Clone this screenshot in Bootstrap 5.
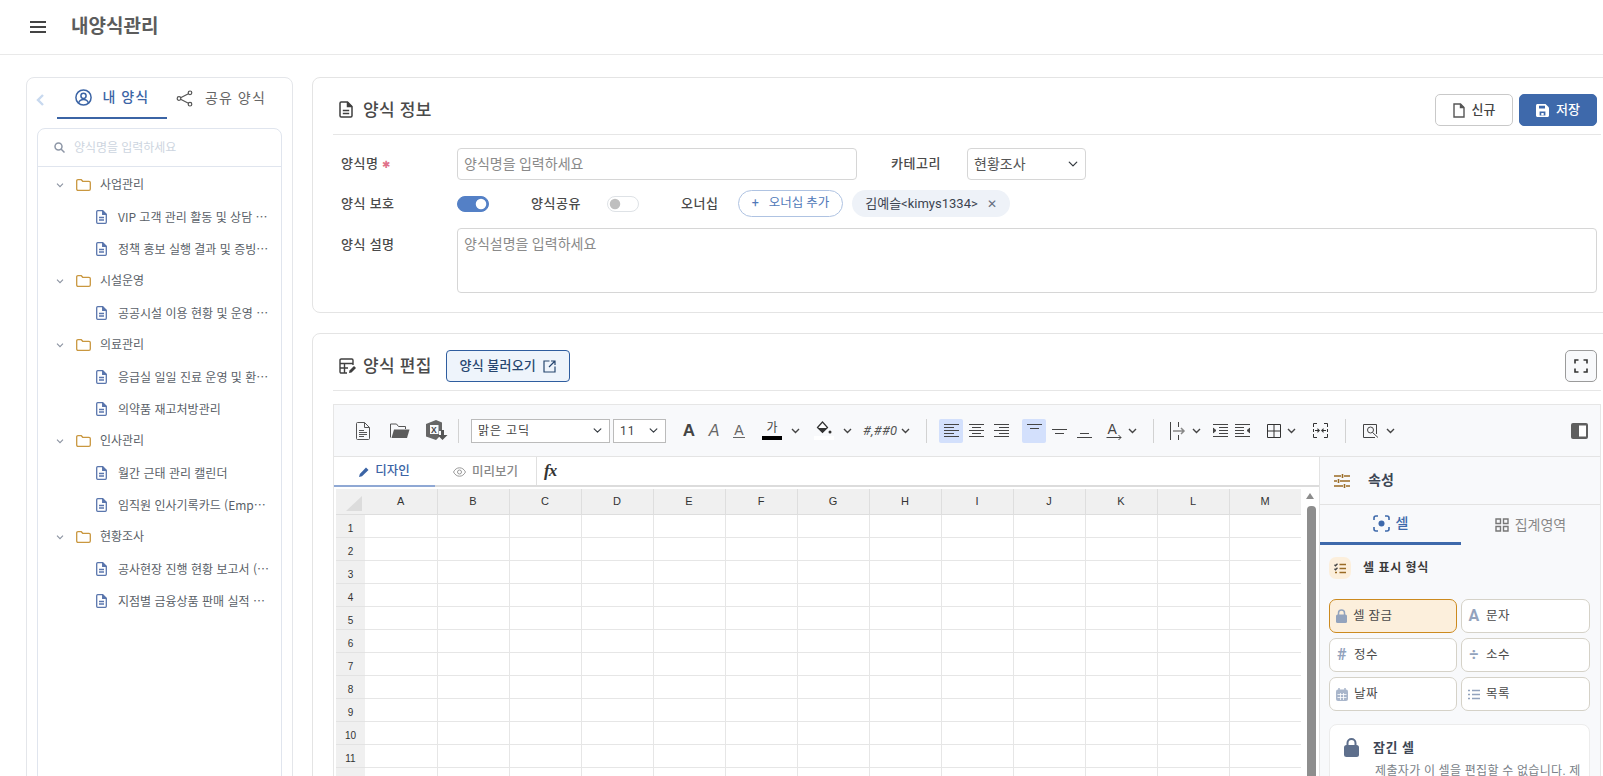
<!DOCTYPE html>
<html lang="ko">
<head>
    <meta charset="UTF-8">
    <meta name="viewport" content="width=device-width, initial-scale=1.0">
    <title>내양식관리</title>
    <link rel="stylesheet" href="https://cdn.jsdelivr.net/npm/bootstrap@5.3.0/dist/css/bootstrap.min.css">
    <style>
        html, body { height: 776px; overflow: hidden; }
        body {
            font-family: Roboto, "Noto Sans CJK KR", sans-serif;
            font-size: 13px;
            color: #444;
            background: #fff;
        }
        svg { display: block; flex: none; }

        .top-bar { height: 55px; border-bottom: 1px solid #e9e9e9; padding-left: 30px; }
        .top-title { font-size: 19px; font-weight: 700; color: #5c5c5c; margin: 0 0 0 25px; }
        .burger { width: 16px; height: 12px; border-top: 2px solid #444; border-bottom: 2px solid #444; position: relative; }
        .burger::after { content: ""; display: block; height: 2px; background: #444; margin-top: 3px; }

        .page-body { padding: 22px 0 0 26px; width: 1640px; }

        .side-box { width: 267px; height: 800px; flex: none; border: 1px solid #e4e6ea; border-radius: 8px; padding: 0 10px; margin-right: 19px; }
        .side-tabs { height: 50px; }
        .side-back { width: 20px; margin-left: -1px; margin-right: 1px; color: #c8d9ef; }
        .side-tab { width: 110px; height: 41px; gap: 11px; font-size: 14px; color: #666; letter-spacing: 1.200px; }
        .side-tab.on { color: #3b64a5; font-weight: 500; border-bottom: 2px solid #3b64a5; }
        .side-tab.other { width: 100px; padding-left: 9px; gap: 12px; white-space: nowrap; letter-spacing: 1.200px; }
        .tree-box { border: 1px solid #e0e5ee; border-radius: 8px 8px 0 0; height: 760px; }
        .tree-search { height: 38px; border-bottom: 1px solid #e0e5ee; padding-left: 16px; gap: 9px; font-size: 12px; color: #cdd5e0; }
        .tree-list { padding-top: 2px; }
        .tree-row { height: 32px; font-size: 12px; color: #5a5f68; }
        .tree-row.folder { padding-left: 18px; }
        .tree-row.folder svg:first-child { margin-right: 12px; }
        .tree-row.folder svg + svg { margin-right: 9px; }
        .tree-row.doc { padding-left: 58px; padding-right: 12px; gap: 11px; }
        .tree-name { font-family: "Noto Sans CJK KR", sans-serif; white-space: nowrap; }

        .main-col { width: 1310px; flex: none; }
        .form-card { border: 1px solid #e4e4e4; border-radius: 8px; padding: 0 0 0 20px; width: 1310px; --bs-card-border-color: #e4e4e4; margin-bottom: 20px; }
        .form-card .card-top { padding: 16px 0 8px 6px; margin-right: 20px; border-bottom: 1px solid #e6e6e6; height: 57px; }
        .card-title-txt { font-size: 17px; font-weight: 500; color: #4a4a4a; letter-spacing: .4px; margin: 0 0 0 10px; }
        .card-title-txt.tight { margin-left: 7px; }
        .top-gap { gap: 6px; }
        .top-btn { width: 78px; height: 32px; font-size: 13px; font-weight: 500; padding: 0; gap: 7px; border-radius: 5px; }
        .top-btn.plain { border: 1px solid #c9c9c9; background: #fff; color: #444; }
        .top-btn.solid { background: #3e69ab; border: 1px solid #3e69ab; color: #fff; }
        .load-btn { width: 124px; height: 32px; padding: 0; margin-left: 14px; font-size: 13px; font-weight: 500; color: #26466f; background: #eef4fb; border: 1px solid #2f5d9f; border-radius: 4px; gap: 7px; letter-spacing: .2px; white-space: nowrap; }
        .full-btn { width: 32px; height: 32px; padding: 0; margin-right: 4px; border: 1px solid #9b9b9b; border-radius: 5px; background: #f8f9fb; }

        .form-body { padding: 13px 24px 19px 8px; }
        .f-row { margin-bottom: 10px; }
        .f-label { font-size: 13px; font-weight: 500; color: #4a4a4a; flex: none; letter-spacing: .5px; }
        .w116 { width: 116px; }
        .req { color: #e0718a; font-size: 10px; margin-left: 4px; }
        .f-input { width: 400px; height: 32px; font-size: 14px; padding: 0 6px; border-color: #d6d6d6; border-radius: 4px; color: #555; }
        .f-input::placeholder, .f-area::placeholder { color: #8a8a8a; }
        .f-select { width: 119px; height: 32px; font-size: 14px; padding: 0 24px 0 6px; border-color: #d6d6d6; border-radius: 4px; color: #555; background-position: right 6px center; background-size: 12px 10px; }
        .f-area { height: 65px; margin-top: 1px; font-size: 14px; padding: 5px 6px; border-color: #d6d6d6; border-radius: 4px; resize: none; }
        .area-label { padding-top: 8px; }
        .sw { width: 32px !important; height: 16px; margin: 0 !important; float: none; }
        .form-check-input.sw:checked { background-color: #5480c6; border-color: #5480c6; }
        .f-switch { padding: 0; min-height: 0; margin: 0; }
        .cat-label { margin-left: 34px; width: 76px; }
        .share-label { margin-left: 42px; width: 50px; }
        .share-sw { margin-left: 26px; }
        .own-label { margin-left: 42px; width: 38px; }
        .owner-add { width: 105px; height: 27px; padding: 0; margin-left: 19px; font-size: 12.500px; color: #5078b8; background: #fff; border: 1px solid #afc3e2; border-radius: 14px; gap: 10px; }
        .owner-chip { width: 158px; height: 27px; margin-left: 9px; font-size: 13px; color: #3c4450; background: #eef2f8; border-radius: 14px; gap: 9px; }
        .chip-x { color: #66707f; font-size: 12px; }

        .editor-box { height: 500px; border: 1px solid #e6e6e6; margin: 13px 20px 0 0; background: #fff; width: 1268px; }
        .tool-bar { height: 52px; background: #f8f9fb; border-bottom: 1px solid #e4e4e4; }
        .t-slot { width: 24px; height: 24px; flex: none; border-radius: 2px; }
        .t-slot.on { background: #d3e0fc; }
        .t-slot.w22 { width: 22px; }
        .t-caret { width: 10px; flex: none; }
        .t-sep { width: 1px; height: 24px; background: #d2d2d2; flex: none; }
        .t-font { width: 139px; height: 24px; font-size: 12px; padding: 0 20px 0 6px; border: 1px solid #bbb; border-radius: 0; color: #444; background-position: right 6px center; background-size: 11px 9px; letter-spacing: 1px; }
        .t-size { width: 53px; margin-left: 3px; }
        .t-fmt { width: 36px; font-size: 13px; font-style: italic; color: #555; letter-spacing: .3px; white-space: nowrap; }
        .a-glyph { font-family: "Liberation Sans", sans-serif; font-size: 16px; line-height: 1; color: #444; }
        .a-bold { font-weight: 700; font-size: 17px; }
        .a-ital { font-style: italic; color: #666; }
        .a-under { color: #666; border-bottom: 1px solid #666; padding: 0 1px; font-size: 14px; }
        .ga-col { width: 20px; flex: none; font-size: 12px; line-height: 1; color: #444; text-align: center; }
        .ga-bar { height: 4px; background: #000; margin-top: 2px; }
        .fill-bar { height: 4px; background: #fff; margin-top: 1px; }
        .fill-col { width: 20px; flex: none; }
        .ml1 { margin-left: 1px; } .ml2 { margin-left: 2px; } .ml3 { margin-left: 3px; }
        .ml5 { margin-left: 5px; } .ml6 { margin-left: 6px; } .ml7 { margin-left: 7px; }
        .ml9 { margin-left: 9px; } .ml10 { margin-left: 10px; } .ml11 { margin-left: 11px; }
        .ml12 { margin-left: 12px; } .ml13 { margin-left: 13px; } .ml14 { margin-left: 14px; } .ml15 { margin-left: 15px; }
        .ml17 { margin-left: 17px; }

        .sheet-side { width: 985px; flex: none; }
        .sheet-tabs { height: 30px; border-bottom: 2px solid #dcdcdc; }
        .s-tab { width: 101px; height: 30px; margin-bottom: -2px; font-size: 12.5px; gap: 6px; color: #888; font-weight: 500; }
        .s-tab.on { color: #3b64a5; border-bottom: 2px solid #8fa8d4; }
        .s-fx { border-left: 1px solid #e0e0e0; width: 400px; padding-left: 7px; height: 28px; font-family: "Liberation Serif", serif; font-style: italic; font-weight: 700; font-size: 17px; color: #333; letter-spacing: -1px; }
        .sheet-wrap { padding: 2px 0 0 2px; height: 460px; overflow: hidden; }
        .sheet-tbl { table-layout: fixed; width: 965px; border-collapse: collapse; font-family: "Liberation Sans", sans-serif; font-size: 11px; color: #333; }
        .sheet-tbl th { background: #f0f0f0; font-weight: 400; text-align: center; border-right: 1px solid #dedede; border-bottom: 1px solid #dedede; padding: 0; }
        .sheet-tbl thead th { height: 25px; padding-top: 0; }
        .sheet-tbl tbody th { height: 23px; padding-top: 7px; font-size: 10px; line-height: 1; border-right: 0; border-bottom-color: #e3e3e3; }
        .sheet-tbl td { border-right: 1px solid #e6e6e6; border-bottom: 1px solid #e6e6e6; padding: 0; }
        .sheet-tbl .corner { position: relative; border-right: 0; }
        .corner-tri { position: absolute; right: 3px; bottom: 3px; width: 0; height: 0; border-left: 16px solid transparent; border-bottom: 15px solid #dcdcdc; }
        .sheet-scroll { width: 18px; flex: none; padding-top: 6px; }
        .scroll-up { width: 0; height: 0; margin: 0 auto; border-left: 4px solid transparent; border-right: 4px solid transparent; border-bottom: 6px solid #8c8c8c; }
        .scroll-thumb { width: 9px; height: 400px; margin: 7px 0 0 6px; background: #8e8e8e; border-radius: 4px 4px 0 0; }

        .prop-side { flex: 1; min-width: 0; background: #f8f9fb; border-left: 1px solid #e3e3e3; padding: 0; }
        .prop-head { height: 48px; border-bottom: 1px solid #e3e3e3; padding-left: 14px; gap: 18px; font-size: 14px; font-weight: 700; color: #3d4654; }
        .prop-tabs { height: 40px; }
        .prop-tab { width: 141px; height: 40px; gap: 6px; font-size: 14px; color: #888; }
        .prop-tab.on { color: #3e69ab; font-weight: 500; border-bottom: 3px solid #3e69ab; }
        .prop-tab.wide { width: 139px; }
        .prop-body { padding: 12px 9px 0; }
        .sec-badge { width: 22px; height: 22px; background: #fcefdc; border-radius: 7px; }
        .sec-title { font-size: 12px; font-weight: 700; color: #3b3b3b; margin-left: 12px; letter-spacing: .7px; }
        .fmt-grid { display: grid; grid-template-columns: 128px 129px; gap: 5px 4px; margin-top: 20px; }
        .fmt-btn { height: 34px; padding: 0 0 0 6px; gap: 6px; font-size: 12.5px; color: #4a4a4a; background: #fff; border: 1px solid #d5d2c8; border-radius: 7px; letter-spacing: .5px; }
        .fmt-btn.on { background: #fcefdc; border-color: #cc8a1e; }
        .fmt-ico { width: 12px; flex: none; font-size: 16px; line-height: 1; color: #93a3bd; text-align: center; font-weight: 700; }
        .info-box { margin-top: 13px; width: 261px; height: 120px; background: #fff; border: 1px solid #ececec; border-radius: 8px; padding: 13px 8px 13px 14px; gap: 14px; }
        .info-title { font-size: 13px; font-weight: 700; color: #3d4654; letter-spacing: .6px; }
        .info-desc { font-size: 12px; color: #7a7f88; margin: 5px 0 0 2px; letter-spacing: .35px; line-height: 1.4; }
    </style>
</head>
<body>
    <nav class="top-bar d-flex align-items-center">
        <div class="burger"></div>
        <h1 class="top-title">내양식관리</h1>
    </nav>

    <div class="page-body d-flex align-items-start">
        <aside class="side-box bg-white">
            <div class="side-tabs d-flex align-items-start">
                <div class="side-back d-flex align-items-center pt-3">
                    <svg width="8" height="12" viewBox="0 0 8 12" fill="none" stroke="currentColor" stroke-width="2.400"><path d="M7 1 2 6l5 5"/></svg>
                </div>
                <div class="side-tab on d-flex align-items-center justify-content-center">
                    <svg width="17" height="17" viewBox="0 0 17 17" fill="none" stroke="currentColor" stroke-width="1.5"><circle cx="8.5" cy="8.5" r="7.6"/><circle cx="8.5" cy="6.8" r="2.6"/><path d="M3.6 14c.8-2.4 2.7-3.4 4.9-3.4s4.100 1 4.900 3.400"/></svg>
                    <span>내 양식</span>
                </div>
                <div class="side-tab other d-flex align-items-center">
                    <svg width="17" height="17" viewBox="0 0 17 17" fill="none" stroke="#555" stroke-width="1.200"><circle cx="14" cy="2.800" r="1.800"/><circle cx="3" cy="8.500" r="1.800"/><circle cx="14" cy="14.200" r="1.800"/><path d="m4.600 7.700 7.800-4M4.600 9.300l7.800 4"/></svg>
                    <span>공유 양식</span>
                </div>
            </div>
            <div class="tree-box">
                <div class="tree-search d-flex align-items-center">
                    <svg width="11" height="11" viewBox="0 0 11 11" fill="none" stroke="#8d96a6" stroke-width="1.500"><circle cx="4.500" cy="4.500" r="3.500"/><path d="m7 7 3.500 3.500"/></svg>
                    <span>양식명을 입력하세요</span>
                </div>
                <div class="tree-list" id="treeList"></div>
            </div>
        </aside>

        <main class="main-col">
            <section class="card form-card">
                <div class="card-top d-flex align-items-center justify-content-between">
                    <div class="d-flex align-items-center">
                        <svg width="14" height="17" viewBox="0 0 14 17" fill="none" stroke="#3f3f3f" stroke-width="1.500"><path d="M1 2.200C1 1.500 1.500 1 2.200 1H8.500L13 5.500v9.300c0 .7-.5 1.200-1.200 1.200H2.200c-.7 0-1.200-.5-1.200-1.200z"/><path d="M8.500 1v4.500H13" fill="#3f3f3f"/><path d="M3.800 9.500h6.400M3.800 12.500h6.400"/></svg>
                        <h2 class="card-title-txt">양식 정보</h2>
                    </div>
                    <div class="d-flex top-gap me-1">
                        <button class="btn top-btn plain d-flex align-items-center justify-content-center">
                            <svg width="12" height="15" viewBox="0 0 12 15" fill="none" stroke="#555" stroke-width="1.400"><path d="M1 1h6.500L11 4.500V14H1z"/><path d="M7.500 1v3.500H11" fill="#555"/></svg>신규
                        </button>
                        <button class="btn top-btn solid d-flex align-items-center justify-content-center">
                            <svg width="13" height="13" viewBox="0 0 13 13"><path fill="#fff" d="M1.500 0h8L13 3.500v8c0 .8-.7 1.500-1.500 1.500h-10C.700 13 0 12.300 0 11.500v-10C0 .700.700 0 1.500 0z"/><path fill="#3e69ab" d="M3 1.800h6v2.700H3zM3.600 7.500h5.800v4H3.600z"/><rect fill="#fff" x="5.300" y="9" width="2.400" height="2.400"/></svg>저장
                        </button>
                    </div>
                </div>
                <form class="form-body">
                    <div class="f-row d-flex align-items-center">
                        <label class="f-label w116">양식명<span class="req">✱</span></label>
                        <input class="form-control f-input" type="text" placeholder="양식명을 입력하세요">
                        <label class="f-label cat-label">카테고리</label>
                        <select class="form-select f-select"><option>현황조사</option></select>
                    </div>
                    <div class="f-row d-flex align-items-center">
                        <label class="f-label w116">양식 보호</label>
                        <div class="form-check form-switch f-switch"><input class="form-check-input sw" type="checkbox" checked></div>
                        <label class="f-label share-label">양식공유</label>
                        <div class="form-check form-switch f-switch share-sw"><input class="form-check-input sw" type="checkbox"></div>
                        <label class="f-label own-label">오너십</label>
                        <button type="button" class="btn owner-add d-flex align-items-center justify-content-center"><span>+</span><span>오너십 추가</span></button>
                        <div class="owner-chip d-flex align-items-center justify-content-center"><span>김예슬&lt;kimys1334&gt;</span><span class="chip-x">✕</span></div>
                    </div>
                    <div class="d-flex align-items-start">
                        <label class="f-label w116 area-label">양식 설명</label>
                        <textarea class="form-control f-area" placeholder="양식설명을 입력하세요"></textarea>
                    </div>
                </form>
            </section>

            <section class="card form-card mb-0">
                <div class="card-top d-flex align-items-center justify-content-between">
                    <div class="d-flex align-items-center">
                        <svg width="17" height="16" viewBox="0 0 17 16" fill="none" stroke="#3f3f3f" stroke-width="1.400"><path d="M8 15H2.200C1.500 15 1 14.500 1 13.800V2.200C1 1.500 1.500 1 2.200 1h10.600c.7 0 1.200.5 1.200 1.200V7"/><path d="M1 5.500h13M1 10h8M5.500 5.500V15"/><path d="m10 15 .5-2.500 4.500-4.500 2 2-4.500 4.500z" fill="#3f3f3f" stroke="none"/></svg>
                        <h2 class="card-title-txt tight">양식 편집</h2>
                        <button type="button" class="btn load-btn d-flex align-items-center justify-content-center">양식 불러오기
                            <svg width="13" height="13" viewBox="0 0 13 13" fill="none" stroke="#26466f" stroke-width="1.200"><path d="M6.500 1H1v11h11V6.500"/><path d="M8 1h4v4M12 1 6 7"/></svg>
                        </button>
                    </div>
                    <button class="btn full-btn d-flex align-items-center justify-content-center">
                        <svg width="14" height="14" viewBox="0 0 14 14" fill="none" stroke="#333" stroke-width="1.600"><path d="M1 4.500V1h3.500M9.500 1H13v3.500M13 9.500V13H9.500M4.500 13H1V9.500"/></svg>
                    </button>
                </div>

                <div class="editor-box">
                    <div class="tool-bar d-flex align-items-center">
                        <div class="t-slot ml17 d-flex align-items-center justify-content-center">
                            <svg width="16" height="18" viewBox="0 0 16 18" fill="none" stroke="#555" stroke-width="1"><path d="M1.500 1.500c0-.5.300-1 1-1h7l5 5v11c0 .6-.4 1-1 1h-11c-.6 0-1-.4-1-1z"/><path d="M9.500.5v5h5M4 8.500h5M4 10.500h8M4 12.500h8M4 14.500h5"/></svg>
                        </div>
                        <div class="t-slot ml13 d-flex align-items-center justify-content-center">
                            <svg width="20" height="16" viewBox="0 0 20 16"><path d="M.500 14.500V1h6l2 2.500h7V6" fill="none" stroke="#555"/><path d="M4 6.500h15.500L17 15H1.500z" fill="#5c5c5c"/></svg>
                        </div>
                        <div class="t-slot ml13 d-flex align-items-center justify-content-center">
                            <svg width="22" height="21" viewBox="0 0 22 21"><path d="M0 4 10 0l6 2.500V11h-3v6l-3 3-10-3.500z" fill="#666"/><rect x="4" y="5" width="8.500" height="9" fill="#f8f9fb"/><text x="5" y="12.500" font-family="Liberation Sans, sans-serif" font-size="8.500" font-weight="700" fill="#444">X</text><path d="M15 10h3v5h3.500l-5 5-5-5H15z" fill="#555"/></svg>
                        </div>
                        <div class="t-sep ml9"></div>
                        <select class="form-select t-font ml12"><option>맑은 고딕</option></select>
                        <select class="form-select t-font t-size"><option>11</option></select>
                        <div class="t-slot ml11 d-flex align-items-center justify-content-center"><span class="a-glyph a-bold">A</span></div>
                        <div class="t-slot ml1 d-flex align-items-center justify-content-center"><span class="a-glyph a-ital">A</span></div>
                        <div class="t-slot ml1 d-flex align-items-center justify-content-center"><span class="a-glyph a-under">A</span></div>
                        <div class="ga-col ml11"><div>가</div><div class="ga-bar"></div></div>
                        <div class="t-caret ml9" data-caret></div>
                        <div class="fill-col ml13">
                            <svg class="mx-auto" width="16" height="14" viewBox="0 0 16 14"><path d="M1.500 6.500 6.500 1l5 5.500-5 5z" fill="#fff" stroke="#333" stroke-width="1.200"/><path d="M1.500 7h10l-5 4.500z" fill="#333"/><circle cx="14" cy="11" r="1.500" fill="#333"/></svg>
                            <div class="fill-bar"></div>
                        </div>
                        <div class="t-caret ml9" data-caret></div>
                        <div class="t-fmt ml10">#,##0</div>
                        <div class="t-caret ml2" data-caret></div>
                        <div class="t-sep ml15"></div>

                        <div class="t-slot on ml12 d-flex align-items-center justify-content-center" data-lines="a0"></div>
                        <div class="t-slot ml1 d-flex align-items-center justify-content-center" data-lines="a1"></div>
                        <div class="t-slot ml1 d-flex align-items-center justify-content-center" data-lines="a2"></div>
                        <div class="t-slot on ml9 d-flex align-items-center justify-content-center">
                            <svg width="15" height="16" viewBox="0 0 15 16" stroke="#444" fill="none"><path d="M0 1.500h15M3 5.500h9"/></svg>
                        </div>
                        <div class="t-slot ml1 d-flex align-items-center justify-content-center">
                            <svg width="15" height="16" viewBox="0 0 15 16" stroke="#444" fill="none"><path d="M0 6.500h15M3 10.500h9"/></svg>
                        </div>
                        <div class="t-slot ml1 d-flex align-items-center justify-content-center">
                            <svg width="15" height="16" viewBox="0 0 15 16" stroke="#444" fill="none"><path d="M3 10.500h9M0 14.500h15"/></svg>
                        </div>
                        <div class="t-slot ml6 d-flex align-items-center justify-content-center">
                            <svg width="16" height="18" viewBox="0 0 16 18" fill="none"><text x="1.500" y="12" font-family="Liberation Sans, sans-serif" font-size="14" fill="#444">A</text><path d="M.500 15.500H15M12.500 13l2.500 2.500-2.500 2.500" stroke="#444"/></svg>
                        </div>
                        <div class="t-caret ml2" data-caret></div>
                        <div class="t-sep ml15"></div>
                        <div class="t-slot ml12 d-flex align-items-center justify-content-center">
                            <svg width="16" height="18" viewBox="0 0 16 18" fill="none"><path d="M.500 0v18M8.500 0v5M8.500 13v5" stroke="#444"/><path d="M3 9h11M11 6l3 3-3 3" stroke="#888" stroke-width="1.500"/></svg>
                        </div>
                        <div class="t-caret ml2" data-caret></div>
                        <div class="t-slot w22 ml7 d-flex align-items-center justify-content-center" data-lines="i0"></div>
                        <div class="t-slot w22 d-flex align-items-center justify-content-center" data-lines="i1"></div>
                        <div class="t-slot ml9 d-flex align-items-center justify-content-center">
                            <svg width="14" height="14" viewBox="0 0 14 14" fill="none" stroke="#333"><path d="M.500.500h13v13H.500zM7 .5v13M.5 7h13"/></svg>
                        </div>
                        <div class="t-caret ml1" data-caret></div>
                        <div class="t-slot ml11 d-flex align-items-center justify-content-center">
                            <svg width="15" height="15" viewBox="0 0 15 15" fill="none" stroke="#333"><path d="M4 .500H.500V4M11 .500h3.500V4M4 14.500H.500V11M11 14.500h3.500V11M.5 6v3M14.500 6v3"/><path d="M2 7.500h4M9 7.500h4" /><path d="m4.500 5 2.500 2.500L4.500 10zM10.500 5 8 7.500l2.500 2.500z" fill="#333" stroke="none"/></svg>
                        </div>
                        <div class="t-sep ml13"></div>
                        <div class="t-slot ml13 d-flex align-items-center justify-content-center">
                            <svg width="17" height="14" viewBox="0 0 17 14" fill="none" stroke="#444"><path d="M12 13.500H.500V.500h13V10"/><circle cx="7.500" cy="6" r="3"/><path d="m9.500 8.500 5.500 5"/></svg>
                        </div>
                        <div class="t-caret ml3" data-caret></div>
                        <div class="ms-auto me-2 pe-1">
                            <svg width="17" height="16" viewBox="0 0 17 16"><rect width="17" height="16" rx="2" fill="#5f5f5f"/><rect x="8" y="2.500" width="7" height="11" fill="#fff"/></svg>
                        </div>
                    </div>

                    <div class="d-flex">
                        <div class="sheet-side">
                            <div class="sheet-tabs d-flex align-items-start">
                                <div class="s-tab on d-flex align-items-center justify-content-center">
                                    <svg width="10" height="11" viewBox="0 0 10 11"><path d="M0 11l.8-3L7 1.500 9.500 4 3 10.200z" fill="#3b64a5"/></svg>디자인
                                </div>
                                <div class="s-tab d-flex align-items-center justify-content-center">
                                    <svg width="13" height="10" viewBox="0 0 13 10" fill="none" stroke="#999"><path d="M.5 5C2 2.200 4 .8 6.500.8S11 2.200 12.500 5C11 7.800 9 9.200 6.500 9.200S2 7.800.5 5z"/><circle cx="6.500" cy="5" r="2"/></svg>미리보기
                                </div>
                                <div class="s-fx d-flex align-items-center">fx</div>
                            </div>
                            <div class="d-flex">
                                <div class="sheet-wrap">
                                    <table class="sheet-tbl" id="sheetTbl"></table>
                                </div>
                                <div class="sheet-scroll">
                                    <div class="scroll-up"></div>
                                    <div class="scroll-thumb"></div>
                                </div>
                            </div>
                        </div>

                        <div class="prop-side">
                            <div class="prop-head d-flex align-items-center">
                                <svg width="16" height="14" viewBox="0 0 16 14" fill="none" stroke="#9a6b25" stroke-width="1.600"><path d="M0 2h7M10 2h6M8.500 0v4M0 7h3M6 7h10M4.500 5v4M0 12h9M12 12h4M10.500 10v4"/></svg>
                                <span>속성</span>
                            </div>
                            <div class="prop-tabs d-flex">
                                <div class="prop-tab on d-flex align-items-center justify-content-center">
                                    <svg width="17" height="17" viewBox="0 0 17 17" fill="none" stroke="#3e69ab" stroke-width="1.600"><path d="M1 5V3c0-1.100.9-2 2-2h2M12 1h2c1.100 0 2 .9 2 2v2M16 12v2c0 1.100-.9 2-2 2h-2M5 16H3c-1.100 0-2-.9-2-2v-2"/><circle cx="8.500" cy="8.500" r="3" fill="#3e69ab" stroke="none"/></svg>셀
                                </div>
                                <div class="prop-tab wide d-flex align-items-center justify-content-center">
                                    <svg width="14" height="14" viewBox="0 0 14 14" fill="none" stroke="#777" stroke-width="1.400"><path d="M1 1h4.500v4.500H1zM8.500 1H13v4.500H8.500zM1 8.500h4.500V13H1zM8.500 8.500H13V13H8.500z"/></svg>집계영역
                                </div>
                            </div>
                            <div class="prop-body">
                                <div class="d-flex align-items-center">
                                    <div class="sec-badge d-flex align-items-center justify-content-center">
                                        <svg width="12" height="11" viewBox="0 0 12 11" fill="none" stroke="#9a6b25" stroke-width="1.300"><path d="M5.500 1.500H12M5.500 5.500H12M5.500 9.500H12"/><path d="m.5 1.800 1 1 2-2M.5 5.800l1 1 2-2" stroke="#444"/><path d="M1 9.500h2"/></svg>
                                    </div>
                                    <div class="sec-title">셀 표시 형식</div>
                                </div>
                                <div class="fmt-grid">
                                    <button class="btn fmt-btn on d-flex align-items-center">
                                        <svg width="11" height="14" viewBox="0 0 11 14"><path d="M2.500 6V4a3 3 0 0 1 6 0v2" fill="none" stroke="#93a3bd" stroke-width="1.500"/><rect y="5.500" width="11" height="8.500" rx="1.500" fill="#93a3bd"/></svg>셀 잠금
                                    </button>
                                    <button class="btn fmt-btn d-flex align-items-center"><span class="fmt-ico">A</span>문자</button>
                                    <button class="btn fmt-btn d-flex align-items-center"><span class="fmt-ico">#</span>정수</button>
                                    <button class="btn fmt-btn d-flex align-items-center"><span class="fmt-ico">÷</span>소수</button>
                                    <button class="btn fmt-btn d-flex align-items-center">
                                        <svg width="12" height="13" viewBox="0 0 12 13"><rect y="1.500" width="12" height="11.500" rx="2" fill="#a9b6cb"/><path d="M3 0v3M9 0v3" stroke="#a9b6cb" stroke-width="1.500"/><path d="M1.500 6.500h9M1.500 9.500h9M4.500 5v7M7.500 5v7" stroke="#fff" stroke-width=".8"/></svg>날짜
                                    </button>
                                    <button class="btn fmt-btn d-flex align-items-center">
                                        <svg width="12" height="11" viewBox="0 0 12 11" stroke="#93a3bd" stroke-width="1.400"><path d="M0 1.500h2M4 1.500h8M0 5.500h2M4 5.500h8M0 9.500h2M4 9.500h8"/></svg>목록
                                    </button>
                                </div>
                                <div class="info-box d-flex">
                                    <svg width="15" height="19" viewBox="0 0 15 19"><path d="M3.500 8V5a4 4 0 0 1 8 0v3" fill="none" stroke="#5e6f8c" stroke-width="2"/><rect y="7" width="15" height="12" rx="2.500" fill="#5e6f8c"/></svg>
                                    <div>
                                        <div class="info-title">잠긴 셀</div>
                                        <div class="info-desc">제출자가 이 셀을 편집할 수 없습니다. 제</div>
                                    </div>
                                </div>
                            </div>
                        </div>
                    </div>
                </div>
            </section>
        </main>
    </div>

    <script>
        // tree data
        const tree = [
            ['사업관리', ['VIP 고객 관리 활동 및 상담 …', '정책 홍보 실행 결과 및 증빙…']],
            ['시설운영', ['공공시설 이용 현황 및 운영 …']],
            ['의료관리', ['응급실 일일 진료 운영 및 환…', '의약품 재고처방관리']],
            ['인사관리', ['월간 근태 관리 캘린더', '임직원 인사기록카드 (Emp…']],
            ['현황조사', ['공사현장 진행 현황 보고서 (…', '지점별 금융상품 판매 실적 …']]
        ];
        const chevron = '<svg width="8" height="5" viewBox="0 0 8 5" fill="none" stroke="#8b93a1" stroke-width="1.100"><path d="m1 .7 3 3 3-3"/></svg>';
        const folder = '<svg width="15" height="12" viewBox="0 0 15 12" fill="none" stroke="#c9973f" stroke-width="1.300"><path d="M.7 2C.7 1.200 1.200.7 2 .7h3.300l1.400 1.600H13c.8 0 1.300.5 1.300 1.300V10c0 .8-.5 1.300-1.300 1.300H2c-.8 0-1.300-.5-1.300-1.300z"/></svg>';
        const doc = '<svg width="11" height="14" viewBox="0 0 11 14" fill="none" stroke="#5a76ad" stroke-width="1.300"><path d="M.7 1.700c0-.6.400-1 1-1h5l3.600 3.600v8c0 .6-.4 1-1 1H1.700c-.6 0-1-.4-1-1z"/><path d="M6.700.7v3.600h3.600" fill="#5a76ad"/><path d="M3 7.500h5M3 10h5"/></svg>';
        let html = '';
        tree.forEach(function(group) {
            html += '<div class="tree-row folder d-flex align-items-center">' + chevron + folder + '<span>' + group[0] + '</span></div>';
            group[1].forEach(function(name) {
                html += '<div class="tree-row doc d-flex align-items-center">' + doc + '<span class="tree-name">' + name + '</span></div>';
            });
        });
        document.getElementById('treeList').innerHTML = html;

        // sheet grid, row 12 is only a sliver in the window so it has no number
        const cols = 'ABCDEFGHIJKLM'.split('');
        let sheet = '<colgroup><col style="width:29px">' + cols.map(() => '<col style="width:72px">').join('') + '</colgroup>';
        sheet += '<thead><tr><th class="corner"><span class="corner-tri"></span></th>' + cols.map(c => '<th>' + c + '</th>').join('') + '</tr></thead><tbody>';
        for (let r = 1; r <= 12; r++) {
            sheet += '<tr><th>' + (r < 12 ? r : '') + '</th>' + cols.map(() => '<td></td>').join('') + '</tr>';
        }
        document.getElementById('sheetTbl').innerHTML = sheet + '</tbody>';

        // small toolbar carets
        document.querySelectorAll('[data-caret]').forEach(function(el) {
            el.innerHTML = '<svg width="9" height="6" viewBox="0 0 9 6" fill="none" stroke="#444" stroke-width="1.400"><path d="m1 1 3.500 3.500L8 1"/></svg>';
        });

        // alignment and indent icons, all made of horizontal lines
        const lineSets = {
            a0: [[0,15],[0,10],[0,15],[0,10],[0,15]],
            a1: [[0,15],[3,12],[0,15],[3,12],[0,15]],
            a2: [[0,15],[5,15],[0,15],[5,15],[0,15]],
            i0: [[0,15],[6,15],[6,15],[6,15],[0,15]],
            i1: [[0,15],[0,9],[0,9],[0,9],[0,15]]
        };
        document.querySelectorAll('[data-lines]').forEach(function(el) {
            const key = el.dataset.lines;
            let d = lineSets[key].map((l, i) => 'M' + l[0] + ' ' + (i * 3 + 1.5) + 'H' + l[1]).join('');
            let extra = '';
            if (key === 'i0') extra = '<path d="M0 5v5l3-2.500z" fill="#444"/>';
            if (key === 'i1') extra = '<path d="M15 5v5l-3-2.500z" fill="#444"/>';
            el.innerHTML = '<svg width="15" height="15" viewBox="0 0 15 15" fill="none" stroke="#444"><path d="' + d + '"/>' + extra + '</svg>';
        });
    </script>
    <script src="https://cdn.jsdelivr.net/npm/bootstrap@5.3.0/dist/js/bootstrap.bundle.min.js"></script>
</body>
</html>
